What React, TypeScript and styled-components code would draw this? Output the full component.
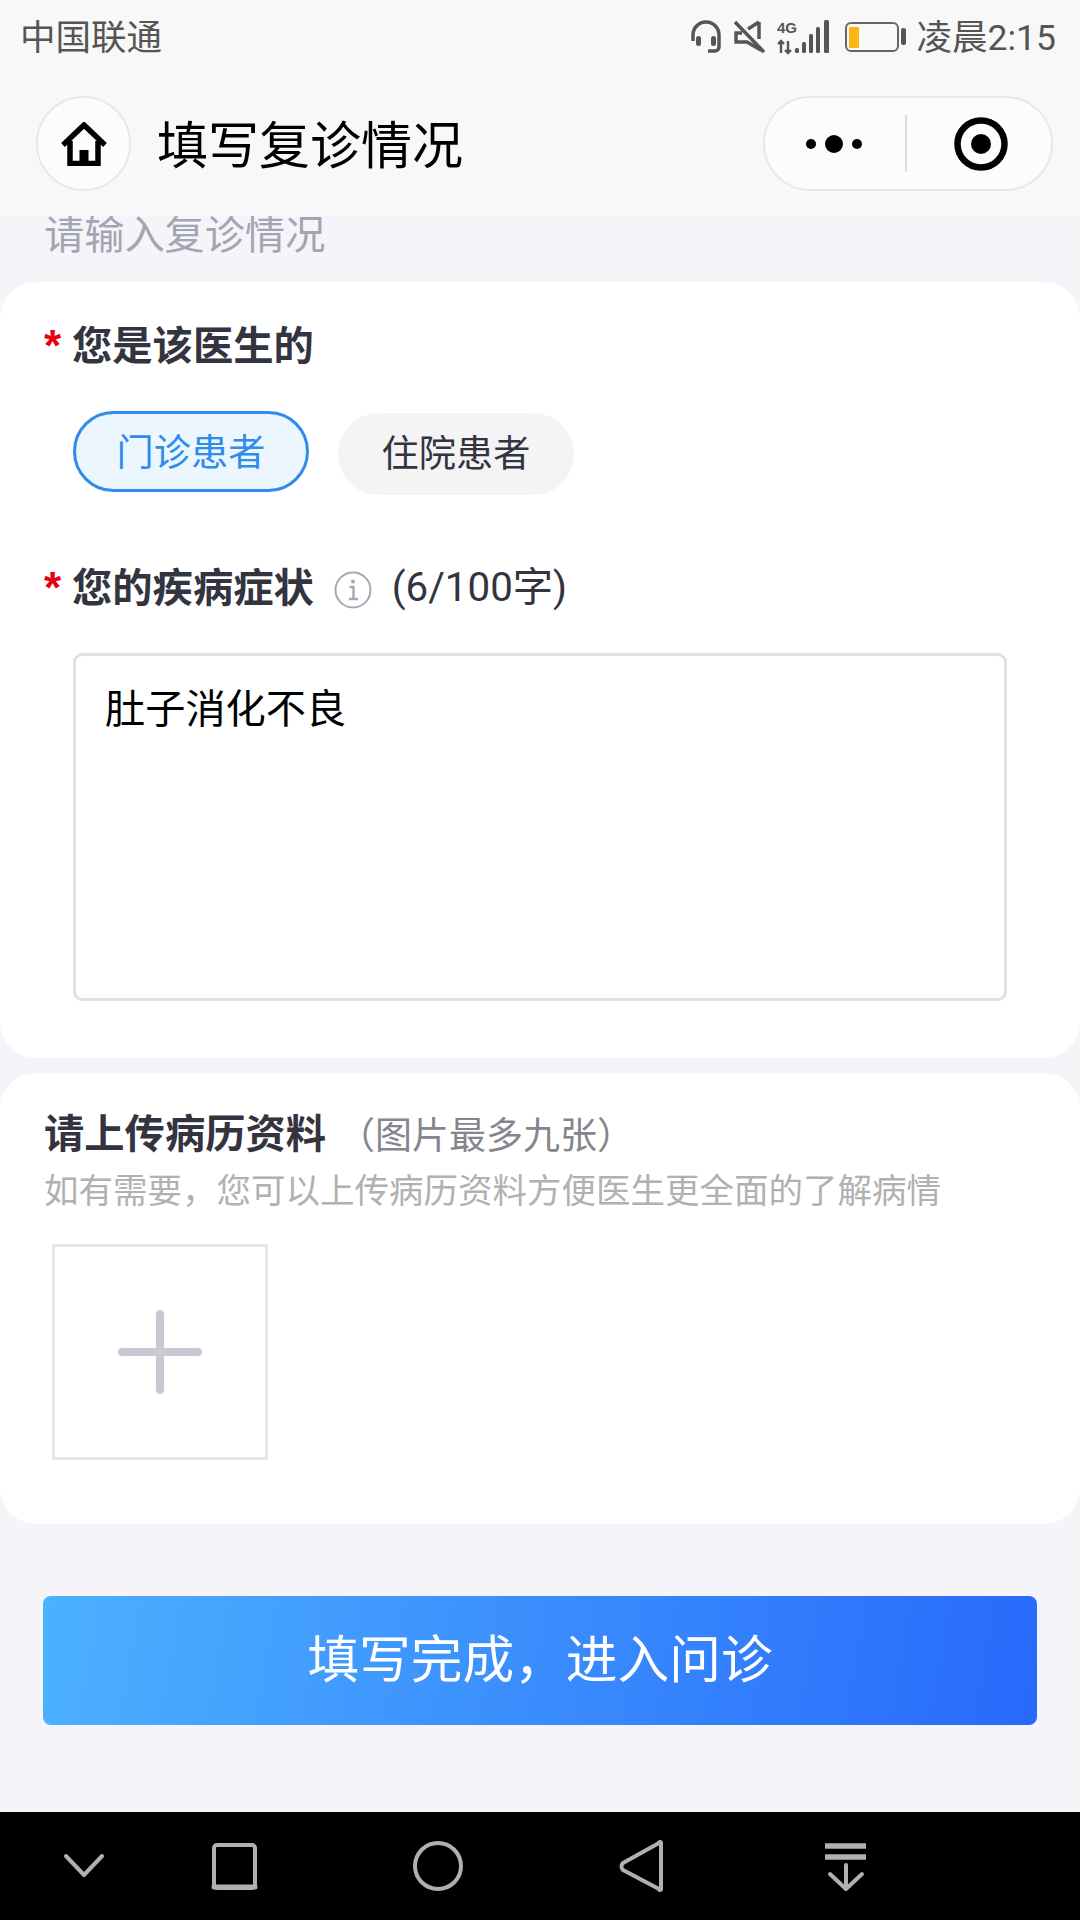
import React from 'react';
import styled, { createGlobalStyle } from 'styled-components';

const GlobalStyle = createGlobalStyle`
  html, body {
    margin: 0;
    padding: 0;
    background: #f4f4f9;
  }
  * {
    box-sizing: border-box;
  }
`;

const Page = styled.div`
  width: 1080px;
  height: 1920px;
  display: flex;
  flex-direction: column;
  overflow: hidden;
  background: #f4f4f9;
  font-family: "Noto Sans CJK SC", "Noto Sans", sans-serif;
  color: #33343f;
`;

const Header = styled.header`
  position: relative;
  z-index: 1;
  height: 216px;
  flex: none;
  background: #f8f8f8;
  display: flex;
  flex-direction: column;
`;

const StatusBar = styled.div`
  height: 74px;
  padding: 0 24px 0 20px;
  display: flex;
  align-items: center;
  justify-content: space-between;
  font-family: Roboto, "Noto Sans CJK SC", sans-serif;
  font-size: 35.5px;
  color: #555;
`;

const StatusText = styled.span`
  padding-bottom: 5px;
`;

const StatusIcons = styled.div`
  display: flex;
  align-items: center;
  gap: 11px;
`;

const NavRow = styled.div`
  margin-top: 22px;
  padding: 0 27px 0 36px;
  display: flex;
  align-items: center;
`;

const HomeButton = styled.div`
  width: 95px;
  height: 95px;
  border-radius: 50%;
  border: 2px solid #e8e8e8;
  background: #fcfcfc;
  display: flex;
  align-items: center;
  justify-content: center;
`;

const Title = styled.h1`
  margin: 0 0 0 26px;
  padding-bottom: 2px;
  flex: 1;
  font-size: 51px;
  font-weight: 400;
  line-height: 93px;
  color: #000;
`;

const Capsule = styled.div`
  width: 290px;
  height: 95px;
  border-radius: 48px;
  border: 2px solid #e8e8e8;
  background: #fcfcfc;
  display: flex;
  align-items: center;
`;

const CapsuleSide = styled.div<{ $inset?: number }>`
  flex: 1;
  height: 57px;
  padding-left: ${({ $inset }) => $inset ?? 0}px;
  display: flex;
  align-items: center;
  justify-content: center;
  & + & {
    border-left: 2px solid #dcdcdc;
  }
`;

const Main = styled.main`
  flex: 1;
  display: flex;
  flex-direction: column;
  overflow: hidden;
`;

const Placeholder = styled.div`
  height: 66px;
  padding: 0 44px 30px;
  display: flex;
  align-items: flex-end;
  font-size: 40.2px;
  line-height: 40px;
  white-space: nowrap;
  color: #a3a5b3;
`;

const Card = styled.section<{ $top: number; $bottom: number }>`
  background: #fff;
  border-radius: 36px;
  padding: ${({ $top, $bottom }) => `${$top}px 44px ${$bottom}px`};
  & + & {
    margin-top: 15px;
  }
`;

const Label = styled.div<{ $gap?: number }>`
  display: flex;
  align-items: center;
  height: 48px;
  padding-bottom: 6px;
  margin-top: ${({ $gap }) => $gap ?? 0}px;
`;

const Star = styled.span`
  width: 28px;
  padding-top: 6px;
  font-family: "Liberation Sans", sans-serif;
  font-size: 44px;
  font-weight: 700;
  line-height: 48px;
  color: #e60012;
`;

const LabelText = styled.span`
  font-size: 40.3px;
  font-weight: 700;
  line-height: 42px;
  color: #33343f;
`;

const Pills = styled.div`
  display: flex;
  gap: 29px;
  margin: 41px 0 0 29px;
`;

const Pill = styled.div<{ $active?: boolean }>`
  width: 236px;
  height: ${({ $active }) => ($active ? 81 : 82)}px;
  margin-top: ${({ $active }) => ($active ? 0 : 2)}px;
  padding-bottom: ${({ $active }) => ($active ? 4 : 6)}px;
  border-radius: 41px;
  display: flex;
  align-items: center;
  justify-content: center;
  font-size: 37.2px;
  border: ${({ $active }) => ($active ? '3px solid #2f8ceb' : 'none')};
  background: ${({ $active }) => ($active ? '#ebf6ff' : '#f4f4f5')};
  color: ${({ $active }) => ($active ? '#2f8ceb' : '#33343f')};
`;

const InfoIcon = styled.svg`
  margin: 10px 0 0 20px;
`;

const Counter = styled.span`
  margin-left: 20px;
  padding-top: 6px;
  font-family: Roboto, "Noto Sans CJK SC", sans-serif;
  font-size: 40.3px;
  line-height: 42px;
  color: #33343f;
`;

const TextBox = styled.div`
  width: 934px;
  height: 348px;
  margin: 41px 0 0 29px;
  padding: 25px 29px;
  border: 3px solid #e0e0e0;
  border-radius: 9px;
  font-size: 40.2px;
  line-height: 50px;
  color: #000;
`;

const UploadTitle = styled.div`
  display: flex;
  align-items: center;
  height: 48px;
  padding-bottom: 4px;
`;

const UploadNote = styled.span`
  margin-left: 12px;
  padding-top: 4px;
  font-size: 37px;
  line-height: 44px;
  color: #85868d;
`;

const Hint = styled.div`
  margin-top: 9px;
  font-size: 34.5px;
  line-height: 44px;
  color: #b1b1b1;
  white-space: nowrap;
`;

const UploadBox = styled.div`
  width: 216px;
  height: 216px;
  margin: 34px 0 0 8px;
  border: 3px solid #e4e6ea;
  display: flex;
  align-items: center;
  justify-content: center;
`;

const SubmitButton = styled.button`
  height: 129px;
  margin: 72px 43px 0;
  padding: 0 0 10px;
  border: none;
  border-radius: 8px;
  background: linear-gradient(100deg, #4cb1ff 0%, #2869fb 100%);
  color: #fff;
  font-family: inherit;
  font-size: 51.7px;
  font-weight: 400;
`;

const NavBar = styled.nav`
  height: 108px;
  flex: none;
  background: #000;
  display: flex;
  justify-content: center;
`;

const Home = () => (
  <svg width="46" height="44" viewBox="0 0 46 44" fill="none" stroke="#000">
    <path d="M2 23 23 3l21 20" strokeWidth="5.5" strokeLinejoin="miter" />
    <path d="M9 19v22.5h28V19" strokeWidth="5.5" />
    <rect x="18.5" y="28" width="9" height="12" fill="#000" stroke="none" />
  </svg>
);

const Headset = () => (
  <svg width="32" height="34" viewBox="0 0 32 34" fill="none" stroke="#555" strokeWidth="3.5">
    <path d="M3 21v-6a13 13 0 0 1 26 0v12a4 4 0 0 1-4 4h-7" />
    <rect x="6" y="16" width="5" height="10" rx="2.5" fill="#555" stroke="none" />
    <rect x="21" y="16" width="5" height="10" rx="2.5" fill="#555" stroke="none" />
  </svg>
);

const Muted = () => (
  <svg width="33" height="34" viewBox="0 0 33 34" fill="none" stroke="#555" strokeWidth="3.5">
    <path d="M2 2l29 30" />
    <path d="M26 2v17M26 26v3L14 22H3v-9h6" />
    <path d="M15 9l11-7" />
  </svg>
);

const Signal = () => (
  <svg width="52" height="36" viewBox="0 0 52 36">
    <text x="0" y="14" fontFamily="Liberation Sans, sans-serif" fontWeight="700" fontSize="15" fill="#555">4G</text>
    <path d="M4 22v12M1 25l3-3 3 3M11 34V22M8 31l3 3 3-3" stroke="#555" strokeWidth="2.4" fill="none" />
    <rect x="18" y="29" width="4" height="5" rx="1.5" fill="#555" />
    <rect x="25" y="23" width="4" height="11" rx="1.5" fill="#555" />
    <rect x="32" y="15" width="4" height="19" rx="1.5" fill="#555" />
    <rect x="39" y="8" width="4" height="26" rx="1.5" fill="#555" />
    <rect x="47" y="1" width="5" height="33" rx="1.5" fill="#555" />
  </svg>
);

const Battery = () => (
  <svg width="66" height="30" viewBox="-5 0 66 30">
    <rect x="1" y="1" width="52" height="28" rx="5" fill="none" stroke="#666" strokeWidth="2" />
    <rect x="4" y="5" width="10" height="21" rx="1" fill="#fbb615" />
    <rect x="56" y="6" width="5" height="17" rx="2" fill="#555" />
  </svg>
);

const Dots = () => (
  <svg width="58" height="20" viewBox="0 0 58 20" fill="#000">
    <circle cx="5" cy="10" r="5" />
    <circle cx="28" cy="10" r="9" />
    <circle cx="51" cy="10" r="5" />
  </svg>
);

const Target = () => (
  <svg width="54" height="54" viewBox="0 0 54 54">
    <circle cx="27" cy="27" r="23.5" fill="none" stroke="#000" strokeWidth="6.5" />
    <circle cx="27" cy="27" r="10" fill="#000" />
  </svg>
);

const Plus = () => (
  <svg width="84" height="84" viewBox="0 0 84 84" fill="#c8c9d2">
    <rect x="0" y="38" width="84" height="8" rx="4" />
    <rect x="38" y="0" width="8" height="84" rx="4" />
  </svg>
);

// the bottom system bar is one drawing: its icons are unevenly spaced
const SystemIcons = () => (
  <svg width="1080" height="108" viewBox="0 0 1080 108" fill="none" stroke="#b0b0b0" strokeWidth="4" strokeLinecap="round" strokeLinejoin="round">
    <path d="M66 44l18 19 18-19" />
    <rect x="214" y="33" width="41" height="43" rx="3" />
    <path d="M214 75h41" strokeWidth="5" />
    <circle cx="438" cy="54" r="23" />
    <path d="M661 31v46a1 1 0 0 1-2 0L623 58a5 5 0 0 1 0-7l36-20a1 1 0 0 1 2 0z" />
    <path d="M825 34h41M825 45h41" strokeWidth="5.5" strokeLinecap="butt" />
    <path d="M846 53v24M830 62l16 15 16-15" />
  </svg>
);

export default function App() {
  return (
    <Page>
      <GlobalStyle />
      <Header>
        <StatusBar>
          <StatusText>中国联通</StatusText>
          <StatusIcons>
            <Headset />
            <Muted />
            <Signal />
            <Battery />
            <StatusText>凌晨2:15</StatusText>
          </StatusIcons>
        </StatusBar>
        <NavRow>
          <HomeButton>
            <Home />
          </HomeButton>
          <Title>填写复诊情况</Title>
          <Capsule>
            <CapsuleSide>
              <Dots />
            </CapsuleSide>
            <CapsuleSide $inset={4}>
              <Target />
            </CapsuleSide>
          </Capsule>
        </NavRow>
      </Header>
      <Main>
        <Placeholder>请输入复诊情况</Placeholder>
        <Card $top={40} $bottom={57}>
          <Label>
            <Star>*</Star>
            <LabelText>您是该医生的</LabelText>
          </Label>
          <Pills>
            <Pill $active>门诊患者</Pill>
            <Pill>住院患者</Pill>
          </Pills>
          <Label $gap={69}>
            <Star>*</Star>
            <LabelText>您的疾病症状</LabelText>
            <InfoIcon width="38" height="38" viewBox="0 0 38 38" fill="none">
              <circle cx="19" cy="19" r="17.5" stroke="#a6a7b3" strokeWidth="2" />
              <circle cx="19" cy="10.5" r="2" fill="#a6a7b3" />
              <path d="M15.5 16h4v12M15 28h9" stroke="#a6a7b3" strokeWidth="2.4" />
            </InfoIcon>
            <Counter>(6/100字)</Counter>
          </Label>
          <TextBox>肚子消化不良</TextBox>
        </Card>
        <Card $top={36} $bottom={64}>
          <UploadTitle>
            <LabelText>请上传病历资料</LabelText>
            <UploadNote>（图片最多九张）</UploadNote>
          </UploadTitle>
          <Hint>如有需要，您可以上传病历资料方便医生更全面的了解病情</Hint>
          <UploadBox>
            <Plus />
          </UploadBox>
        </Card>
        <SubmitButton>填写完成，进入问诊</SubmitButton>
      </Main>
      <NavBar>
        <SystemIcons />
      </NavBar>
    </Page>
  );
}
